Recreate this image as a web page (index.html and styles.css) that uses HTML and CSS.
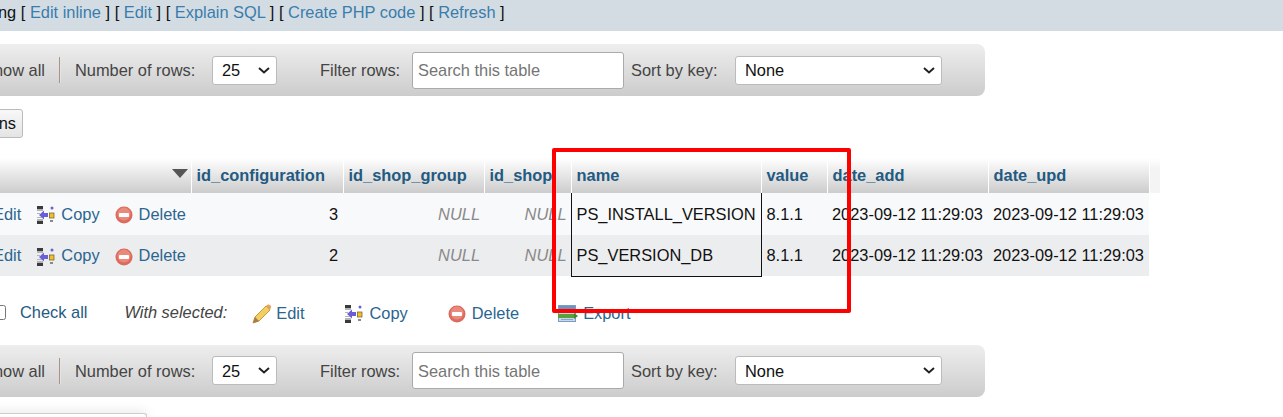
FILE: index.html
```html
<!DOCTYPE html>
<html lang="en">
<head>
<meta charset="utf-8">
<title>phpMyAdmin</title>
<link rel="stylesheet" href="styles.css">
</head>
<body>
<svg class="defs" width="0" height="0" aria-hidden="true">
  <symbol id="i-copy" viewBox="0 0 18 18">
    <path d="M0 0h6v3H0zM0 15h6v3H0z" fill="#3a3a3a"/>
    <path d="M0 3h6v2H0zM0 7h3v1H0zM0 11h5v1H0zM0 13h6v2H0z" fill="#b5b5b5"/>
    <path d="M2 9l5-4.500V7h4v4H7v2.500z" fill="#6a5fd8"/>
    <rect x="12.500" y="7" width="4.500" height="5" fill="#f0c030" stroke="#6b5a20" stroke-width=".7"/>
    <circle cx="15" cy="2" r="1.500" fill="#6a5fd8"/>
    <rect x="13" y="14" width="3" height="2" fill="#8a8a8a"/>
  </symbol>
  <symbol id="i-del" viewBox="0 0 18 18">
    <circle cx="9" cy="9" r="8.500" fill="#dc6a5e"/>
    <circle cx="9" cy="8" r="6.500" fill="#ea8a7c"/>
    <rect x="4" y="7" width="10" height="4" rx=".8" fill="#fff"/>
  </symbol>
  <symbol id="i-pen" viewBox="0 0 20 20">
    <path d="M1 19l2-6L14 2l4 4L7 17z" fill="#f2cf62" stroke="#c49a3c" stroke-width="1"/>
    <path d="M14 2l1.500-1.200c1-.6 2-.3 2.800.5s1 1.800.5 2.700L18 6z" fill="#e9a35f"/>
    <path d="M1 19l2-6 4 4z" fill="#a87a48"/>
  </symbol>
  <symbol id="i-exp" viewBox="0 0 20 18">
    <rect x=".5" y=".5" width="17" height="16" fill="#c9d8ec" stroke="#7c9cc4"/>
    <rect x="1" y="1" width="16" height="3" fill="#6f92bf"/>
    <path d="M3 7h12M3 14.500h12" stroke="#8aa6c8"/>
    <rect x="0" y="9" width="16" height="4" fill="#58a23c"/>
    <path d="M16 8l4 3-4 3z" fill="#3e8a2a"/>
  </symbol>
</svg>

<main class="page">
  <div class="sqlbar">Profiling [ <a>Edit inline</a> ] [ <a>Edit</a> ] [ <a>Explain SQL</a> ] [ <a>Create PHP code</a> ] [ <a>Refresh</a> ]</div>

  <div class="nav nav-first">
    <label class="show">Show all</label>
    <span class="sep"></span>
    <span class="rows-label">Number of rows:</span>
    <select class="sel-rows"><option>25</option></select>
    <span class="filter-label">Filter rows:</span>
    <input class="search" placeholder="Search this table">
    <span class="sort-label">Sort by key:</span>
    <select class="sel-key"><option>None</option></select>
  </div>

  <button class="options">Options</button>

  <table class="data">
    <colgroup>
      <col class="c-act"><col class="c-id"><col class="c-group"><col class="c-shop"><col class="c-name"><col class="c-val"><col class="c-date"><col class="c-date"><col class="c-tail">
    </colgroup>
    <thead>
      <tr>
        <th class="th-act"><span class="arrow"></span></th>
        <th>id_configuration</th>
        <th>id_shop_group</th>
        <th>id_shop</th>
        <th>name</th>
        <th>value</th>
        <th>date_add</th>
        <th>date_upd</th>
        <th class="tail"></th>
      </tr>
    </thead>
    <tbody>
      <tr>
        <td>
          <div class="acts">
            <a class="act a-edit">Edit</a>
            <a class="act a-copy"><svg class="ic"><use href="#i-copy"/></svg>Copy</a>
            <a class="act a-del"><svg class="ic"><use href="#i-del"/></svg>Delete</a>
          </div>
        </td>
        <td class="num">3</td>
        <td class="null">NULL</td>
        <td class="null">NULL</td>
        <td class="mark">PS_INSTALL_VERSION</td>
        <td>8.1.1</td>
        <td>2023-09-12 11:29:03</td>
        <td>2023-09-12 11:29:03</td>
        <td class="blank"></td>
      </tr>
      <tr class="even">
        <td>
          <div class="acts">
            <a class="act a-edit">Edit</a>
            <a class="act a-copy"><svg class="ic"><use href="#i-copy"/></svg>Copy</a>
            <a class="act a-del"><svg class="ic"><use href="#i-del"/></svg>Delete</a>
          </div>
        </td>
        <td class="num">2</td>
        <td class="null">NULL</td>
        <td class="null">NULL</td>
        <td class="mark mark-last">PS_VERSION_DB</td>
        <td>8.1.1</td>
        <td>2023-09-12 11:29:03</td>
        <td>2023-09-12 11:29:03</td>
        <td class="blank"></td>
      </tr>
    </tbody>
  </table>

  <div class="bulk">
    <input type="checkbox" class="chk">
    <a class="check-all">Check all</a>
    <em class="with">With selected:</em>
    <a class="b b-edit"><svg class="ic ic-pen"><use href="#i-pen"/></svg>Edit</a>
    <a class="b b-copy"><svg class="ic"><use href="#i-copy"/></svg>Copy</a>
    <a class="b b-del"><svg class="ic"><use href="#i-del"/></svg>Delete</a>
    <a class="b b-exp"><svg class="ic ic-exp"><use href="#i-exp"/></svg>Export</a>
  </div>

  <div class="nav nav-second">
    <label class="show">Show all</label>
    <span class="sep"></span>
    <span class="rows-label">Number of rows:</span>
    <select class="sel-rows"><option>25</option></select>
    <span class="filter-label">Filter rows:</span>
    <input class="search" placeholder="Search this table">
    <span class="sort-label">Sort by key:</span>
    <select class="sel-key"><option>None</option></select>
  </div>

  <div class="stub"></div>
</main>

<div class="redbox"></div>
</body>
</html>
```

FILE: styles.css
```css
html, body {
  margin: 0;
  padding: 0;
  height: 417px;
  overflow: hidden;
  background: #fff;
}
body {
  position: relative;
  font-family: "Liberation Sans", Arial, sans-serif;
  font-size: 16.4px;
  color: #111;
}
.defs { position: absolute; }
.page {
  margin-left: -60px;
  width: 1343px;
}
a { color: #235a81; text-decoration: none; }

.sqlbar {
  height: 31px;
  box-sizing: border-box;
  background: #d3dce3;
  padding: 3px 0 0 17px;
  line-height: 19px;
  white-space: nowrap;
}
.sqlbar a { color: #3a7cab; }

.nav {
  display: flex;
  align-items: center;
  width: 1045px;
  height: 52px;
  box-sizing: border-box;
  background: linear-gradient(#eeeeee, #cccccc);
  border-radius: 0 8px 8px 0;
  color: #444;
  white-space: nowrap;
}
.nav-first { margin-top: 13px; }
.nav-second .show,
.nav-second .rows-label,
.nav-second .filter-label,
.nav-second .sort-label,
.nav-second .search { padding-top: 2px; }
.show { width: 105px; text-align: right; flex: none; }
.sep {
  flex: none;
  width: 2px;
  height: 26px;
  margin-left: 14px;
  background: #e4e4e4;
  border-left: 1px solid #a89484;
  box-sizing: border-box;
}
.rows-label { margin-left: 14px; width: 119px; flex: none; }
.sel-rows, .sel-key {
  flex: none;
  height: 29px;
  box-sizing: border-box;
  font: 16.4px "Liberation Sans", Arial, sans-serif;
  color: #111;
  appearance: none;
  background: #fff url("data:image/svg+xml,%3Csvg xmlns='http://www.w3.org/2000/svg' width='12' height='7'%3E%3Cpath d='M1 1l5 4.500L11 1' fill='none' stroke='%23222' stroke-width='2'/%3E%3C/svg%3E") no-repeat right 6px center;
  border: 1px solid #bbb;
  border-radius: 3px;
  padding: 0 4px 0 9px;
}
.sel-rows { width: 65px; margin-left: 18px; }
.filter-label { margin-left: 43px; width: 79px; flex: none; }
.search {
  flex: none;
  width: 212px;
  height: 37px;
  box-sizing: border-box;
  margin-left: 13px;
  padding: 0 5px;
  font: 16.4px "Liberation Sans", Arial, sans-serif;
  background: #fff;
  border: 1px solid #aaa;
  border-radius: 3px;
}
.search::placeholder { color: #757575; opacity: 1; }
.sort-label { margin-left: 7px; width: 87px; flex: none; }
.sel-key { width: 207px; margin-left: 17px; }

.options {
  display: block;
  margin: 13px 0 0 0;
  width: 83px;
  height: 29px;
  box-sizing: border-box;
  padding: 0 6px 0 0;
  text-align: right;
  font: 16.4px "Liberation Sans", Arial, sans-serif;
  color: #111;
  background: linear-gradient(#f8f8f8, #e4e4e4);
  border: 1px solid #bbb;
  border-radius: 3px;
}

.data {
  margin-top: 20px;
  border-collapse: collapse;
  table-layout: fixed;
  width: 1220px;
}
.c-act { width: 251px; }
.c-id { width: 152px; }
.c-group { width: 141px; }
.c-shop { width: 87px; }
.c-name { width: 190px; }
.c-val { width: 66px; }
.c-date { width: 161px; }
.c-tail { width: 11px; }

.data th {
  height: 35px;
  padding: 0 5px;
  text-align: left;
  font-weight: bold;
  color: #235a81;
  background: linear-gradient(#ffffff, #cccccc);
  border-left: 1px solid #fff;
  white-space: nowrap;
  box-sizing: border-box;
}
.data th.th-act { border-left: 0; text-align: right; padding-right: 3px; }
.data th.tail {
  background: linear-gradient(#ffffff, #f4f4f4 30%);
  padding: 0;
}
.arrow {
  display: inline-block;
  width: 0;
  height: 0;
  border-left: 8px solid transparent;
  border-right: 8px solid transparent;
  border-top: 9px solid #555;
  vertical-align: 3px;
}
.data td {
  height: 42px;
  padding: 0 5px;
  background: #f8f9fb;
  white-space: nowrap;
  box-sizing: border-box;
}
.data .even td { height: 41px; background: #ecedef; }
.data td.blank { background: #fff; padding: 0; }
.num { text-align: right; }
.data td.null { text-align: right; font-style: italic; color: #8a8a8a; padding-right: 4px; }
.data td.mark {
  border-left: 1px solid #111;
  border-right: 1px solid #111;
}
.data td.mark-last { border-bottom: 1px solid #111; }

.acts {
  display: flex;
  align-items: center;
  margin-left: 48px;
}
.act { display: inline-flex; align-items: center; color: #2b6590; }
.ic { width: 18px; height: 18px; flex: none; margin-right: 6px; }
.act .ic { margin-top: 2px; }
.a-edit { width: 29px; }
.a-copy { margin-left: 16px; }
.a-del { margin-left: 15px; }

.bulk {
  display: flex;
  align-items: center;
  height: 68px;
  padding-top: 4px;
  box-sizing: border-box;
  white-space: nowrap;
}
.chk {
  flex: none;
  width: 15px;
  height: 15px;
  margin: 0 0 0 51px;
}
.check-all { margin-left: 14px; }
.with { margin-left: 37px; color: #444; }
.b { display: inline-flex; align-items: center; color: #2b6590; padding-top: 2px; }
.b-edit { margin-left: 25px; }
.b-copy { margin-left: 41px; }
.b-del { margin-left: 40px; }
.b-exp { margin-left: 39px; }
.ic-pen { width: 20px; height: 20px; margin-right: 4px; }
.ic-exp { width: 20px; height: 18px; margin-right: 5px; }

.stub {
  margin-top: 16px;
  width: 207px;
  height: 4px;
  box-sizing: border-box;
  background: #fff;
  border: 1px solid #ccc;
  border-bottom: 0;
  border-radius: 3px 3px 0 0;
  box-shadow: 0 0 12px rgba(0, 0, 0, .2);
}

.redbox {
  position: absolute;
  left: 552px;
  top: 148px;
  width: 299px;
  height: 165px;
  box-sizing: border-box;
  border: 4px solid #ff0000;
  border-radius: 2px;
}
```
